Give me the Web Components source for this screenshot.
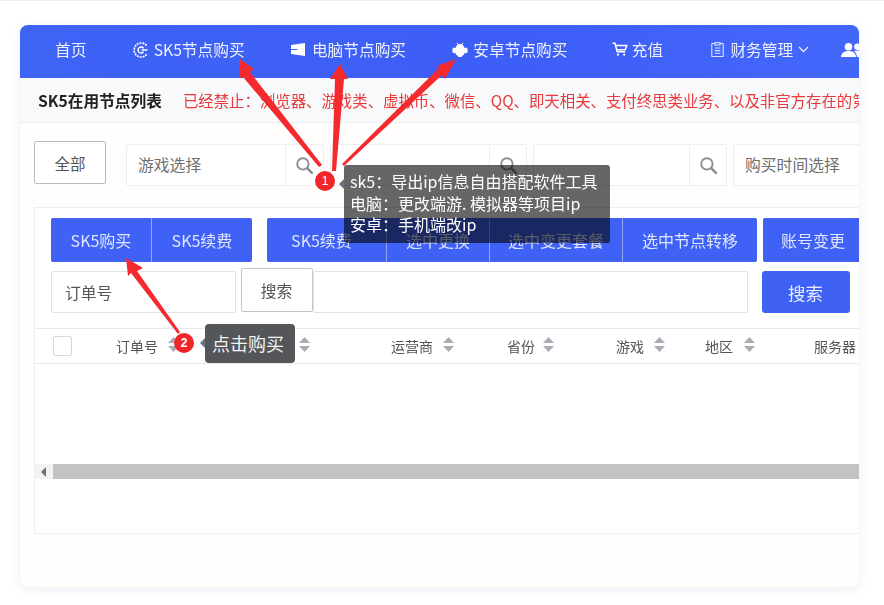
<!DOCTYPE html>
<html lang="zh-CN"><head><meta charset="utf-8"><title>SK5</title>
<style>
html,body{margin:0;padding:0;background:#fff;overflow:hidden}
body{font-family:"Noto Sans CJK SC","Noto Sans",sans-serif;color:#555}
</style></head><body>
<x-page></x-page>
<script>
const el=(tag,attrs={})=>{const e=document.createElement(tag);for(const k in attrs)e.setAttribute(k,attrs[k]);return e};
class Base extends HTMLElement{
  constructor(){super();this.attachShadow({mode:'open'})}
  render(css,html){this.shadowRoot.innerHTML=`<style>${css}</style>${html}`}
}
const ICONS={
 ring:`<svg width="16" height="16" viewBox="0 0 16 16" fill="none" stroke="#fff"><path d="M13.600 3.600A7 7 0 1 0 13.600 12.400" stroke-width="1.700" stroke-dasharray="2 .9"/><path d="M10.600 6.400A3 3 0 1 0 10.600 9.600" stroke-width="1.500"/><path d="M8.500 8h6" stroke-width="1.600"/></svg>`,
 win:`<svg width="14" height="13" viewBox="0 0 14 13"><path d="M0 2 14 0v13L0 11z" fill="#fff"/><path d="M0 6.500h6.500" stroke="#3f63f5" stroke-width="1"/></svg>`,
 android:`<svg width="16" height="16" viewBox="0 0 16 16" fill="#fff"><path d="M3.800 6C4 3.400 5.800 2 8 2s4 1.400 4.200 4z"/><path d="M5 .8 6.500 3M11 .8 9.500 3" stroke="#fff" stroke-width="1"/><path d="M3.600 6h8.800v5.800c0 .8-.6 1.400-1.300 1.400H4.900c-.7 0-1.300-.6-1.300-1.400z"/><rect x=".4" y="5.600" width="4" height="5.600" rx="2"/><rect x="11.600" y="5.600" width="4" height="5.600" rx="2"/><rect x="5.600" y="12" width="4.800" height="3" rx="1.400"/></svg>`,
 cart:`<svg width="16" height="15" viewBox="0 0 16 15" fill="none" stroke="#fff" stroke-width="1.500"><path d="M.5 1.200H3l2.200 8.600h8"/><path d="M3.500 3.400h11.300l-1.600 4.400H4.800"/><circle cx="6" cy="12.700" r="1.100" fill="#fff" stroke="none"/><circle cx="12.200" cy="12.700" r="1.100" fill="#fff" stroke="none"/></svg>`,
 note:`<svg width="13" height="15" viewBox="0 0 13 15" fill="none" stroke="#dfe6ff" stroke-width="1.100"><rect x=".8" y="1.500" width="11.400" height="13" rx=".6"/><rect x="4" y=".6" width="5" height="2.400" fill="#3f62f6"/><path d="M3.600 6h5.800M3.600 8.600h5.800M3.600 11.200h5.800"/></svg>`,
 users:`<svg width="24" height="16" viewBox="0 0 24 16" fill="#fff"><circle cx="7.500" cy="4.800" r="3.800"/><path d="M0 15c.3-3.900 3-6 7.500-6s7.200 2.100 7.500 6z"/><circle cx="16.500" cy="4.800" r="3.300"/><path d="M16 15c-.2-2.700-1.300-4.700-3-5.700 1-.5 2.200-.7 3.500-.7 4.200 0 6.700 2.200 7 6.400z"/></svg>`,
 search:`<svg width="19" height="19" viewBox="0 0 18 18" fill="none" stroke="#8b8f8f"><circle cx="7.500" cy="7.500" r="5.400" stroke-width="1.800"/><path d="M11.500 11.500 16 16" stroke-width="2.400" stroke-linecap="round"/></svg>`
};

customElements.define('x-page',class extends Base{
  connectedCallback(){
    this.render(`:host{display:block;box-sizing:border-box;width:884px;height:605px;padding:24px 25px 18px 20px;border-top:1px solid #ededed;position:relative;filter:blur(.4px)}
      .card{height:562px;width:839px;border-radius:8px;overflow:hidden;background:#fffefd;box-shadow:0 3px 10px rgba(200,208,230,.35)}`,
      `<div class="card"><slot></slot></div><slot name="over"></slot>`);
    this.append(el('x-nav'),el('x-notice'),el('x-filter'),el('x-panel'));
    this.append(el('x-notes',{slot:'over'}));
  }
});

customElements.define('x-nav-item',class extends Base{
  connectedCallback(){
    const i=this.getAttribute('icon');
    this.render(`:host{display:flex;align-items:center;flex:none;gap:5px;font-size:15.700px;color:#eef1ff}
     svg{display:block;flex:none}.c{margin-left:-1px}`,
     `${i?ICONS[i]:''}<slot></slot>${this.hasAttribute('caret')?'<svg class="c" width="11" height="7" viewBox="0 0 11 7" fill="none" stroke="#e6ebff" stroke-width="1.300"><path d="m1 1 4.500 4.500L10 1"/></svg>':''}`);
  }
});

customElements.define('x-nav',class extends Base{
  connectedCallback(){
    this.render(`:host{display:flex;align-items:center;box-sizing:border-box;height:53px;padding:0 0 4px 35px;gap:46.300px;background:linear-gradient(90deg,#3f63f5,#3d5ef7 60%,#4467fb);overflow:hidden}`,`<slot></slot>`);
    this.innerHTML=`<x-nav-item>首页</x-nav-item><x-nav-item icon="ring">SK5节点购买</x-nav-item><x-nav-item icon="win" style="gap:7px">电脑节点购买</x-nav-item><x-nav-item icon="android">安卓节点购买</x-nav-item><x-nav-item icon="cart" style="gap:4px;margin:0 2px 0 -2px">充值</x-nav-item><x-nav-item icon="note" style="gap:6px" caret>财务管理</x-nav-item><x-nav-item icon="users" style="margin-left:-14px"></x-nav-item>`;
  }
});

customElements.define('x-notice',class extends Base{
  connectedCallback(){
    this.render(`:host{display:flex;align-items:center;height:45px;padding-left:18px;gap:21px;background:#f8f9fb;border-bottom:1px solid #eceef2;box-sizing:border-box;white-space:nowrap;overflow:hidden}
     b{font-weight:700;font-size:15.700px;color:#222;flex:none}span{font-size:15.400px;color:#e8393c;flex:none}`,
     `<b>SK5在用节点列表</b><span>已经禁止：浏览器、游戏类、虚拟币、微信、QQ、即天相关、支付终思类业务、以及非官方存在的第</span>`);
  }
});

customElements.define('x-search-select',class extends Base{
  connectedCallback(){
    const w=this.getAttribute('w'),b=this.getAttribute('b');
    const btn=b?`<div class="b" style="width:${b}px">${ICONS.search}</div>`:'';
    this.render(`:host{display:flex;flex:none;box-sizing:border-box;height:42px;border:1px solid #eceef2;background:#fff;width:${w}px;border-radius:2px}
     .t{flex:1;display:flex;align-items:center;padding-left:11px;font-size:15.800px;color:#6f6f6f;margin-top:-2px}
     .b{flex:none;display:flex;align-items:center;justify-content:center;border-left:1px solid #eceef2;box-sizing:border-box}`,
     `<div class="t"><slot></slot></div>${btn}`);
  }
});

customElements.define('x-filter',class extends Base{
  connectedCallback(){
    this.render(`:host{display:flex;align-items:flex-start;padding:18px 0 0 14px;height:84px;box-sizing:border-box;gap:6px}
     .all{flex:none;box-sizing:border-box;width:72px;height:43px;margin-right:14px;border:1px solid #b9bbbd;border-radius:2px;background:#fff;display:flex;align-items:center;justify-content:center;font-size:15.500px;color:#555}
     .r{display:flex;gap:6px;margin-top:3px}`,
     `<div class="all">全部</div><div class="r"><slot></slot></div>`);
    this.innerHTML=`<x-search-select w="198" b="38">游戏选择</x-search-select><x-search-select w="197" b="37"></x-search-select><x-search-select w="194" b="37"></x-search-select><x-search-select w="150">购买时间选择</x-search-select>`;
  }
});

customElements.define('x-btn-group',class extends Base{
  connectedCallback(){
    this.render(`:host{display:flex;flex:none;height:44px;background:#4061f5;border-radius:2px;overflow:hidden}`,`<slot></slot>`);
  }
});
customElements.define('x-btn',class extends Base{
  connectedCallback(){
    this.render(`:host{display:flex;flex:none;align-items:center;justify-content:center;box-sizing:border-box;width:${this.getAttribute('w')}px;font-size:16px;color:#dfe6ff;padding-right:${this.getAttribute('pr')||0}px}
     :host(:not(:last-child)){border-right:1px solid #93a6f6}`,`<slot></slot>`);
  }
});

customElements.define('x-sort',class extends Base{
  connectedCallback(){
    this.render(`:host{display:block;flex:none;width:11px;height:17px}svg{display:block}`,
     `<svg width="11" height="17" viewBox="0 0 11 17" fill="#a9adb6"><path d="M5.500 1 11 7H0zM5.500 16 0 10h11z"/></svg>`);
  }
});

customElements.define('x-panel',class extends Base{
  connectedCallback(){
    this.render(`:host{display:block;box-sizing:border-box;margin-left:14px;width:840px;height:327px;border:1px solid #eceef3;border-right:0;background:#fff;overflow:hidden}
     .bar{display:flex;gap:15px;padding:10px 0 0 16px;height:44px}
     .bar .g3{margin-left:-9px}
     .s{display:flex;align-items:flex-start;height:66px;padding:6px 0 0 16px;box-sizing:border-box}
     .i{box-sizing:border-box;height:42px;margin-top:3px;border:1px solid #dfe2e6;border-radius:2px;background:#fff;flex:none}
     .i1{width:184.500px;display:flex;align-items:center;padding-left:13px;font-size:15.800px;color:#555}
     .w{box-sizing:border-box;flex:none;width:72px;height:44px;margin-left:5px;border:1px solid #c4c7ca;border-radius:2px;background:#fff;display:flex;align-items:center;justify-content:center;font-size:15.800px;color:#555}
     .i2{width:435px}
     .go{flex:none;box-sizing:border-box;width:88px;height:42px;margin:3px 0 0 14px;border-radius:3px;background:#3f62f5;color:#e8edff;font-size:17.500px;display:flex;align-items:center;justify-content:center}`,
     `<div class="bar">
        <x-btn-group><x-btn w="101">SK5购买</x-btn><x-btn w="100">SK5续费</x-btn></x-btn-group>
        <x-btn-group><x-btn w="120" pr="10">SK5续费</x-btn><x-btn w="103">选中更换</x-btn><x-btn w="133">选中变更套餐</x-btn><x-btn w="134">选中节点转移</x-btn></x-btn-group>
        <x-btn-group class="g3"><x-btn w="100">账号变更</x-btn></x-btn-group>
      </div>
      <div class="s"><div class="i i1">订单号</div><div class="w">搜索</div><div class="i i2"></div><div class="go">搜索</div></div>
      <x-table></x-table>`);
  }
});

customElements.define('x-table',class extends Base{
  connectedCallback(){
    this.render(`:host{display:block}
     .h{display:grid;grid-template-columns:18px 45px 183px 92px 116px 109px 89px 109px 60px;align-items:center;height:36px;box-sizing:border-box;border-top:1px solid #e6e8ec;border-bottom:1px solid #e6e8ec;background:#fff;padding-left:18px;font-size:14px;color:#555;white-space:nowrap}
     .cb{width:19px;height:20px;box-sizing:border-box;border:1px solid #d4d7dc;border-radius:2px;background:#fff}
     .c{display:flex;align-items:center}.c x-sort{margin-top:-3px}
     .body{height:100px}
     .sb{display:flex;height:15px}.l{flex:none;width:18px;background:#f1f3f5;display:flex;align-items:center;justify-content:center}
     .t{flex:1;background:#c2c3c3}`,
     `<div class="h"><div class="cb"></div><div></div>
       <div class="c" style="gap:10px">订单号<x-sort></x-sort></div>
       <div class="c"><x-sort></x-sort></div>
       <div class="c" style="gap:10px">运营商<x-sort></x-sort></div>
       <div class="c" style="gap:8px">省份<x-sort></x-sort></div>
       <div class="c" style="gap:10px">游戏<x-sort></x-sort></div>
       <div class="c" style="gap:11px">地区<x-sort></x-sort></div>
       <div class="c">服务器</div></div>
      <div class="body"></div>
      <div class="sb"><div class="l"><svg width="6" height="10" viewBox="0 0 6 10" fill="#6f7276"><path d="M5 0v10L0 5z"/></svg></div><div class="t"></div></div>`);
  }
});

customElements.define('x-notes',class extends Base{
  connectedCallback(){
    this.render(`:host{position:absolute;inset:0;display:block;pointer-events:none}
     svg.a{position:absolute;left:0;top:0}
     .tip{position:absolute;box-sizing:border-box;color:#fff;border-radius:3px}
     .t1{left:344px;top:164px;width:266px;height:78px;background:rgba(0,0,0,.6);padding:6px 0 0 6px;font-size:16px;line-height:21.500px;white-space:nowrap}
     .t2{left:205px;top:323px;width:90px;height:39px;background:#54565a;border-radius:4px;padding-right:4px;font-size:18px;line-height:38px;text-align:center;color:#f2f2f2}
     .tip::before{content:"";position:absolute;left:-5px;top:14px;border:5px solid transparent;border-left:0;border-right-color:rgba(70,80,100,.8)}
     .d{position:absolute;width:20px;height:20px;border-radius:50%;background:#f0262b;color:#fff;font:700 12px/20px "Liberation Sans",sans-serif;text-align:center}
     .d1{left:315px;top:170px;font-weight:400}.d2{left:174px;top:332px}`,
     `<svg class="a" width="884" height="605" viewBox="0 0 884 605" fill="#f52a2e">
        <polygon points="240,58 254,68 250,71 322,164 319,166 243,76 240,77"/>
        <polygon points="340,63 348,78 344,78 336,170 332,170 335,78 330,78"/>
        <polygon points="456,58 445,78 442,74 344,165 342,163 439,67 437,65"/>
        <polygon points="126,257 143,267 137,270 180,331 178,333 131,272 128,275"/>
      </svg>
      <div class="tip t1">sk5：导出ip信息自由搭配软件工具<br>电脑：更改端游. 模拟器等项目ip<br>安卓：手机端改ip</div>
      <div class="d d1">1</div>
      <div class="tip t2">点击购买</div>
      <div class="d d2">2</div>`);
  }
});
</script>
</body></html>
